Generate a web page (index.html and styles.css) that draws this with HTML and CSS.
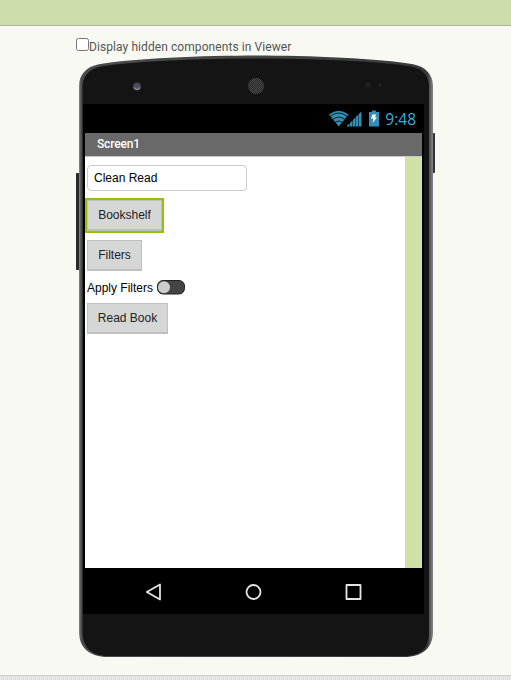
FILE: index.html
```html
<!DOCTYPE html>
<html lang="en">
<head>
<meta charset="utf-8">
<title>Viewer</title>
<link rel="stylesheet" href="styles.css">
</head>
<body>
<header class="viewer-header"></header>
<main class="viewer">
  <label class="hidden-toggle"><input type="checkbox"><span>Display hidden components in Viewer</span></label>
  <div class="phone">
    <svg class="phone-frame" width="361" height="602" viewBox="75 55 361 602">
      <defs>
        <linearGradient id="rim" x1="0" x2="1" y1="0" y2="0">
          <stop offset="0" stop-color="#8a8b8c"/><stop offset=".006" stop-color="#4a4b4c"/><stop offset=".5" stop-color="#434444"/><stop offset=".985" stop-color="#38393a"/><stop offset="1" stop-color="#858687"/>
        </linearGradient>
        <pattern id="mesh" width="2" height="2" patternUnits="userSpaceOnUse"><rect width="2" height="2" fill="#292929"/><path d="M0 0h1v1H0zM1 1h1v1H1z" fill="#484848"/></pattern>
        <radialGradient id="lens"><stop offset="0" stop-color="#393995"/><stop offset=".4" stop-color="#555568"/><stop offset="1" stop-color="#303034"/></radialGradient>
      </defs>
      <rect x="76" y="173" width="5" height="97" rx="1" fill="#29292a"/>
      <rect x="431" y="133" width="4" height="40" rx="1" fill="#343434"/>
      <path d="M79 86C79 75 86 66.500 99 64.200C130 58.500 205 55.500 256 55.500S382 58.500 413 64.200C426 66.500 433 75 433 86V632C433 647 423 657 404 657H108C89 657 79 647 79 632Z" fill="url(#rim)"/>
      <path d="M82.500 87C82.500 77 88 69 101 66.500C132 61 206 58.500 256 58.500S380 61 411 66.500C424 69 429 77 429 87V632C429 647 422 656 404 656H108C91 656 82.500 647 82.500 632Z" fill="#141414"/>
      <circle cx="137" cy="86.500" r="4.300" fill="url(#lens)"/><path d="M134 87.500q3 4 6 0" fill="none" stroke="#999" stroke-width="1.200"/>
      <circle cx="256" cy="86" r="8" fill="url(#mesh)"/>
      <circle cx="368" cy="85" r="3" fill="#202020"/><circle cx="380" cy="85" r="2" fill="#202020"/>
    </svg>
    <div class="screen">
      <div class="status-bar">
        <svg width="50" height="18" viewBox="0 0 50 18" fill="#318eb4">
          <path d="M0 4.500Q9.700-2.800 19.500 4.500L9.800 16.500Z"/>
          <path d="M1.500 6.300Q9.700-.3 18 6.300M3.800 9.400Q9.700 4.800 15.800 9.400M6.200 12.300Q9.700 9.600 13.300 12.300" fill="none" stroke="#000" stroke-width=".8"/>
          <path d="M18 16.500v-1l2.500-1.900v2.900zM21 16.500v-3.500l2.500-2.500v6zM24 16.500V9.800l2.500-2.500v9.200zM27 16.500V6.800l2.500-2.500v12.200zM30 16.500V3.800l2.500-2.300v15z"/>
          <path d="M40 2h3V.5h4V2h3v14.500H40Z"/>
          <path d="M43.500 4.500H47L46 7.500h2L43.500 13l1-4.500H42Z" fill="#fff"/>
        </svg>
        <span class="clock">9:48</span>
      </div>
      <div class="title-bar">Screen1</div>
      <div class="form">
        <div class="components">
          <input class="text-box" type="text" value="Clean Read">
          <div class="button selected">Bookshelf</div>
          <div class="button filters">Filters</div>
          <div class="switch-row"><span>Apply Filters</span>
            <svg width="28" height="15" viewBox="0 0 28 15"><rect x=".5" y=".5" width="27" height="13.500" rx="5.500" fill="#444" stroke="#222"/><circle cx="7" cy="7.200" r="6" fill="#ccc"/></svg>
          </div>
          <div class="button read-book">Read Book</div>
        </div>
        <div class="scroll-edge"></div>
      </div>
      <nav class="nav-bar">
        <svg viewBox="0 0 18 18"><path d="M1.800 9L15 1.500V16.500Z"/></svg>
        <svg viewBox="0 0 18 18"><circle cx="8.500" cy="9" r="7"/></svg>
        <svg viewBox="0 0 18 18"><rect x="1.500" y="2" width="14" height="14"/></svg>
      </nav>
    </div>
  </div>
</main>
<footer class="viewer-footer"></footer>
</body>
</html>
```

FILE: styles.css
```css
* { box-sizing: border-box; }
body { margin: 0; height: 680px; overflow: hidden; display: flex; flex-direction: column; background: #f8f9f3; font-family: Roboto, sans-serif; font-size: 12px; }
.viewer-header { height: 26px; flex: none; background: #cddcab; border-bottom: 1px solid #adb49f; }
.viewer { height: 649px; flex: none; padding-left: 75px; }
.hidden-toggle { display: flex; height: 29px; padding: 12px 0 0 1px; color: #555; line-height: 18px; letter-spacing: .08px; }
.hidden-toggle input { width: 13px; height: 13px; margin: 0; }
.phone { position: relative; width: 361px; height: 602px; padding: 49px 0 0 8px; }
.phone-frame { position: absolute; top: 0; left: 0; }
.screen { position: relative; width: 341px; height: 510px; background: #000; padding: 0 2px; display: flex; flex-direction: column; }
.status-bar { height: 29px; display: flex; justify-content: flex-end; padding: 6px 6px 0 0; gap: 6px; }
.clock { color: #33b0dd; font-family: "Open Sans", sans-serif; font-size: 15.5px; line-height: 18px; }
.title-bar { height: 24px; padding-left: 12px; background: #696969; border-bottom: 1px solid #c9c4c9; color: #fff; font-weight: 500; line-height: 22px; letter-spacing: -.15px; }
.form { height: 411px; display: flex; background: #fff; }
.components { flex: 1; display: flex; flex-direction: column; align-items: flex-start; padding: 8px 0 0 2px; font-family: "Liberation Sans", Arial, sans-serif; }
.scroll-edge { width: 17px; background: #d2e0a6; }
.text-box { width: 160px; height: 26px; padding: 0 6px; border: 1px solid #ccc; border-radius: 4px; font: 12px "Liberation Sans", Arial, sans-serif; color: #000; }
.button { height: 31px; border: 1px solid #c0c0c0; border-bottom-width: 2px; background: #d5d7d6; color: #222; text-align: center; line-height: 28px; }
.selected { width: 79px; height: 35px; margin: 7px 0 0 -2px; border: 2px solid #93c00b; line-height: 31px; box-shadow: inset 0 0 0 1px #c0c0c0, inset 0 -2px #bbb; }
.filters { width: 55px; margin-top: 7px; }
.switch-row { display: flex; height: 16px; margin-top: 9px; gap: 4px; line-height: 17px; color: #000; }
.read-book { width: 81px; margin-top: 7px; }
.nav-bar { height: 46px; display: flex; padding: 15px 0 0 60px; gap: 82px; }
.nav-bar svg { width: 18px; height: 18px; fill: none; stroke: #e5e5e5; stroke-width: 1.8; stroke-linejoin: round; }
.viewer-footer { height: 5px; flex: none; border-top: 1px solid #ccc; background: repeating-linear-gradient(90deg, #e9e9e9 0 1px, #dedede 1px 2px); }
```
